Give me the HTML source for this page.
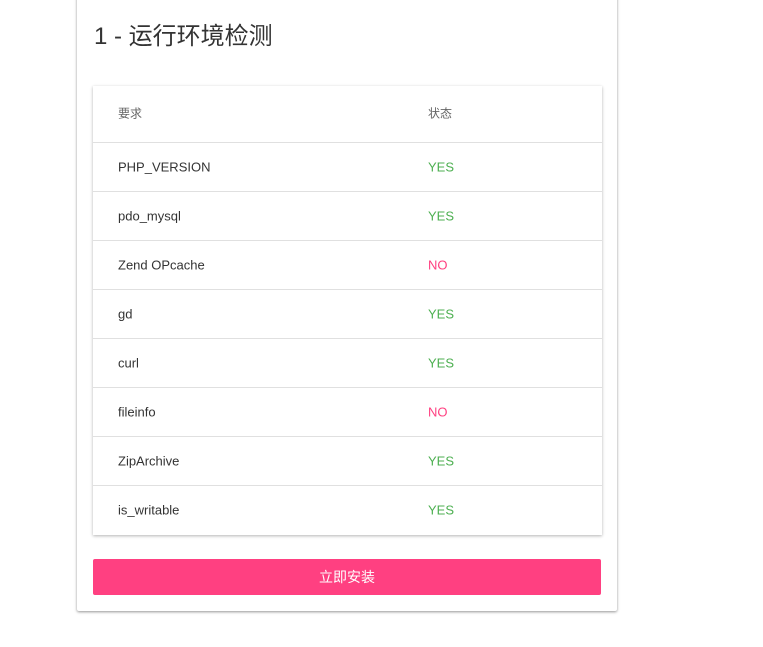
<!DOCTYPE html>
<html><head><meta charset="utf-8"><style>
body{margin:0;background:#fff;width:763px;height:647px;overflow:hidden;font-family:"Liberation Sans","Noto Sans CJK SC",sans-serif;position:relative}
.card{position:absolute;left:77px;top:-10px;width:540px;height:621px;background:#fff;box-shadow:0 1px 3px rgba(0,0,0,.25),0 1px 2px rgba(0,0,0,.2);border-radius:2px}
h1{position:absolute;left:94px;top:22px;margin:0;font-weight:normal;font-size:24px;color:#333;line-height:30px}
.tbl{position:absolute;left:93px;top:86px;width:509px;height:449px;box-shadow:0 1px 3px rgba(0,0,0,.3);background:#fff}
.row{height:48px;border-top:1px solid #e0e0e0;position:relative;font-size:13px;color:#333}
.row.h{height:56px;border-top:none;color:#666;font-size:12px}
.row span{position:absolute;top:50%;transform:translateY(-50%)}
.row.h span{margin-top:-1px}
.a{left:25px}.b{left:335px}
.y{color:#4caf50}.n{color:#ff4081}
.btn{position:absolute;left:93px;top:559px;width:508px;height:36px;background:#ff4081;border-radius:2px;color:#fff;font-size:14px;text-align:center;line-height:36px}
</style></head><body>
<div class="card"></div>
<h1>1 - 运行环境检测</h1>
<div class="tbl">
<div class="row h"><span class="a">要求</span><span class="b">状态</span></div>
<div class="row"><span class="a">PHP_VERSION</span><span class="b y">YES</span></div>
<div class="row"><span class="a">pdo_mysql</span><span class="b y">YES</span></div>
<div class="row"><span class="a">Zend OPcache</span><span class="b n">NO</span></div>
<div class="row"><span class="a">gd</span><span class="b y">YES</span></div>
<div class="row"><span class="a">curl</span><span class="b y">YES</span></div>
<div class="row"><span class="a">fileinfo</span><span class="b n">NO</span></div>
<div class="row"><span class="a">ZipArchive</span><span class="b y">YES</span></div>
<div class="row"><span class="a">is_writable</span><span class="b y">YES</span></div>
</div>
<div class="btn">立即安装</div>
</body></html>
